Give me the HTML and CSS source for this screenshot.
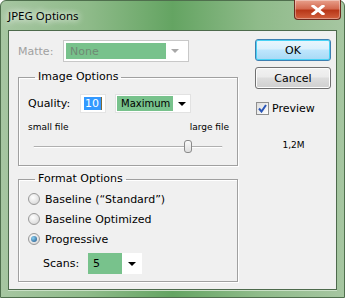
FILE: index.html
```
<!DOCTYPE html>
<html>
<head>
<meta charset="utf-8">
<title>JPEG Options</title>
<link rel="stylesheet" href="styles.css">
</head>
<body>
<div class="window">
	<div class="titlebar">
		<span class="title">JPEG Options</span>
		<span class="close">
			<svg width="14" height="10" viewBox="0 0 14 10"><path d="M2 1 L12 9 M12 1 L2 9" stroke="#fff" stroke-width="3" stroke-linecap="square"/></svg>
		</span>
	</div>
	<div class="client">
		<div class="main">
			<div class="matte-row">
				<span class="label disabled">Matte:</span>
				<span class="select matte">
					<span class="sel-value">None</span>
					<span class="arrow gray"></span>
				</span>
			</div>

			<fieldset class="group image-opts">
				<legend>Image Options</legend>
				<div class="quality-row">
					<span class="label">Quality:</span>
					<span class="input"><span class="hl">10</span></span>
					<span class="select quality">
						<span class="sel-value">Maximum</span>
						<span class="arrow"></span>
					</span>
				</div>
				<div class="size-row">
					<span>small file</span>
					<span>large file</span>
				</div>
				<div class="slider">
					<div class="track"></div>
					<div class="thumb"></div>
				</div>
			</fieldset>

			<fieldset class="group format-opts">
				<legend>Format Options</legend>
				<div class="radio first"><span class="dot"></span>Baseline (&ldquo;Standard&rdquo;)</div>
				<div class="radio"><span class="dot"></span>Baseline Optimized</div>
				<div class="radio"><span class="dot on"></span>Progressive</div>
				<div class="scans-row">
					<span class="label">Scans:</span>
					<span class="select scans">
						<span class="sel-value">5</span>
						<span class="arrow"></span>
					</span>
				</div>
			</fieldset>
		</div>

		<div class="side">
			<div class="btn default">OK</div>
			<div class="btn">Cancel</div>
			<div class="check-row">
				<span class="checkbox">
					<svg width="9" height="9" viewBox="0 0 9 9"><path d="M1 4.5 L3.5 7.5 L8 1" stroke="#2a56b8" stroke-width="2" fill="none"/></svg>
				</span>
				Preview
			</div>
			<div class="size">1,2M</div>
		</div>
	</div>
</div>
</body>
</html>
```

FILE: styles.css
```
body{
	margin:0;
	font-family:"DejaVu Sans", sans-serif;
	font-size:11px;
	color:#000;
	background:#fff;
}
.window{
	width:345px;
	height:298px;
	box-sizing:border-box;
	background:linear-gradient(to right, #a6c6a1 0%, #8fbb8a 25%, #64a462 50%, #8fbb8a 75%, #a6c6a1 100%);
	border:1px solid #4f6f4d;
	border-radius:6px 6px 0 0;
	position:relative;
}
.titlebar{
	height:29px;
	display:flex;
	align-items:center;
	padding-left:7px;
}
.title{
	font-family:"Noto Sans", sans-serif;
	font-size:11.5px;
	text-shadow:0 0 6px #fff, 0 0 8px #fff;
	margin-top:-1px;
}
.close{
	position:absolute;
	right:3px;
	top:-1px;
	width:47px;
	height:20px;
	box-sizing:border-box;
	border:1px solid #6b2a1e;
	border-top:none;
	border-radius:0 0 4px 4px;
	background:linear-gradient(#e8a08c 0%, #d46a50 45%, #b83718 55%, #d2603e 100%);
	box-shadow:inset 0 0 0 1px rgba(255,255,255,.35);
	display:flex;
	align-items:center;
	justify-content:center;
}
.client{
	margin:0 7px;
	height:260px;
	box-sizing:border-box;
	border:1px solid #4d6a4c;
	background:#f0f0f0;
	display:flex;
	box-shadow:0 1px 0 #c9e0c6;
}
.main{
	width:220px;
	padding:9px 0 0 9px;
}
.matte-row{
	display:flex;
	align-items:center;
	height:22px;
}
.matte-row .label{
	width:45px;
}
.label.disabled{
	color:#a0a0a0;
}
.select{
	display:flex;
	align-items:center;
	box-sizing:border-box;
	background:#fff;
	border:1px solid #e2e2e2;
}
.sel-value{
	background:#78c28c;
	height:100%;
	display:flex;
	align-items:center;
	padding-left:4px;
	box-sizing:border-box;
	white-space:nowrap;
	overflow:hidden;
	flex-shrink:0;
}
.matte{
	width:126px;
	height:22px;
	border-color:#c8c8c8;
	padding:2px;
}
.matte .sel-value{
	width:100px;
	color:#6f8a74;
}
.arrow{
	flex-shrink:0;
	width:0;
	height:0;
	border-left:4px solid transparent;
	border-right:4px solid transparent;
	border-top:4px solid #000;
	margin-left:auto;
	margin-right:6px;
}
.arrow.gray{
	border-top-color:#a8a8a8;
	margin-right:7px;
}
.group{
	margin:0;
	width:220px;
	box-sizing:border-box;
	border:1px solid #a0a0a0;
	box-shadow:inset 1px 1px 0 #fff, 1px 1px 0 #fff;
	padding:0 0 0 9px;
}
.group legend{
	margin-left:7px;
	padding:0 3px;
	line-height:14px;
}
.image-opts{
	margin-top:8px;
	height:96px;
}
.quality-row{
	display:flex;
	align-items:center;
	height:19px;
	margin-top:10px;
}
.quality-row .label{
	width:52px;
}
.input{
	width:26px;
	height:19px;
	box-sizing:border-box;
	background:#fff;
	border:1px solid #e4e4e4;
	padding:2px 0 0 3px;
}
.hl{
	display:inline-block;
	background:#3399ff;
	color:#fff;
	line-height:13px;
	padding:0 2px 0 1px;
	border-right:1px solid #7a6a3a;
}
.quality{
	margin-left:9px;
	width:76px;
	height:19px;
	padding:1px;
}
.quality .sel-value{
	width:56px;
	font-size:10px;
	padding-left:4px;
}
.quality .arrow{
	margin-right:3px;
}
.size-row{
	display:flex;
	justify-content:space-between;
	width:201px;
	margin-top:9px;
	font-size:9px;
	line-height:11px;
}
.slider{
	position:relative;
	height:13px;
	margin:7px 0 0 5px;
	width:190px;
}
.track{
	position:absolute;
	left:0;
	right:0;
	top:6px;
	height:1px;
	background:#b0b0b0;
	border-bottom:1px solid #fff;
	border-left:1px solid #e0e0e0;
	border-right:1px solid #e0e0e0;
}
.thumb{
	position:absolute;
	left:151px;
	top:0;
	width:8px;
	height:13px;
	box-sizing:border-box;
	border:1px solid #8a8a8a;
	border-radius:3px;
	background:linear-gradient(#fafafa, #dedede);
}
.format-opts{
	margin-top:6px;
	height:110px;
}
.radio{
	display:flex;
	align-items:center;
	height:20px;
}
.radio.first{
	margin-top:3px;
}
.dot{
	width:12px;
	height:12px;
	box-sizing:border-box;
	border-radius:50%;
	border:1px solid #9a9a9a;
	background:radial-gradient(circle at 40% 35%, #ffffff, #d0d0d0);
	margin-right:5px;
	display:flex;
	align-items:center;
	justify-content:center;
}
.dot.on::after{
	content:"";
	width:6px;
	height:6px;
	border-radius:50%;
	background:radial-gradient(circle at 35% 35%, #8ad0f0, #1a4f86);
}
.scans-row{
	display:flex;
	align-items:center;
	height:21px;
	margin-top:4px;
	padding-left:15px;
}
.scans-row .label{
	width:45px;
}
.scans{
	width:54px;
	height:21px;
	border:none;
}
.scans .sel-value{
	width:34px;
	padding-left:5px;
}
.side{
	margin-left:17px;
	padding-top:8px;
	width:76px;
	display:flex;
	flex-direction:column;
}
.btn{
	height:22px;
	box-sizing:border-box;
	border:1px solid #707070;
	border-radius:3px;
	background:linear-gradient(#f2f2f2 0%, #ebebeb 45%, #dddddd 50%, #cfcfcf 100%);
	box-shadow:inset 0 0 0 1px #fcfcfc;
	display:flex;
	align-items:center;
	justify-content:center;
	margin-bottom:6px;
}
.btn.default{
	border-color:#3c7fb1;
	background:linear-gradient(#eaf6fd 0%, #d9f0fc 45%, #bee6fd 50%, #a7d9f5 100%);
	box-shadow:inset 0 0 0 1px #48d2f5;
}
.check-row{
	display:flex;
	align-items:center;
	margin-top:7px;
	padding-left:1px;
}
.checkbox{
	width:13px;
	height:13px;
	box-sizing:border-box;
	border:1px solid #8f8f8f;
	background:linear-gradient(135deg, #dcdcdc, #ffffff);
	margin-right:3px;
	display:flex;
	align-items:center;
	justify-content:center;
}
.size{
	margin-top:25px;
	text-align:center;
	font-size:9px;
	padding-left:1px;
}
```
